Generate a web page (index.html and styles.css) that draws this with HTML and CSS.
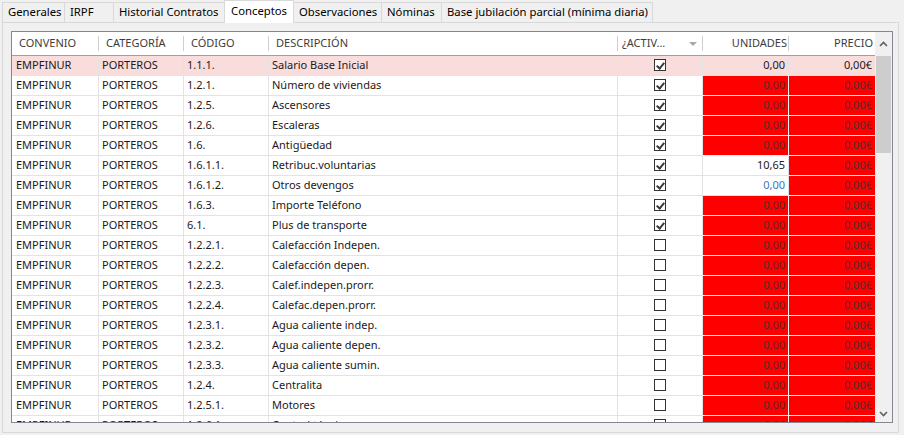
FILE: index.html
```html
<!DOCTYPE html>
<html lang="es">
<head>
<meta charset="utf-8">
<title>Conceptos</title>
<link rel="stylesheet" href="styles.css">
</head>
<body>
<div class="tabs">
  <div class="tab t-gen">Generales</div>
  <div class="tab t-irpf">IRPF</div>
  <div class="tab t-hist">Historial Contratos</div>
  <div class="tab t-conc active">Conceptos</div>
  <div class="tab t-obs">Observaciones</div>
  <div class="tab t-nom">Nóminas</div>
  <div class="tab t-base">Base jubilación parcial (mínima diaria)</div>
</div>
<div class="panel">
  <div class="grid">
    <div class="table">
      <div class="head">
        <div class="h">CONVENIO</div>
        <div class="h">CATEGORÍA</div>
        <div class="h">CÓDIGO</div>
        <div class="h">DESCRIPCIÓN</div>
        <div class="h h-act">¿ACTIV...<span class="drop"></span></div>
        <div class="h num">UNIDADES</div>
        <div class="h num last">PRECIO</div>
      </div>
      <div class="row sel"><div class="c first">EMPFINUR</div><div class="c">PORTEROS</div><div class="c">1.1.1.</div><div class="c">Salario Base Inicial</div><div class="c chk"><span class="box on"></span></div><div class="c num">0,00</div><div class="c num">0,00€</div></div>
      <div class="row"><div class="c first">EMPFINUR</div><div class="c">PORTEROS</div><div class="c">1.2.1.</div><div class="c">Número de viviendas</div><div class="c chk"><span class="box on"></span></div><div class="c num red">0,00</div><div class="c num red">0,00€</div></div>
      <div class="row"><div class="c first">EMPFINUR</div><div class="c">PORTEROS</div><div class="c">1.2.5.</div><div class="c">Ascensores</div><div class="c chk"><span class="box on"></span></div><div class="c num red">0,00</div><div class="c num red">0,00€</div></div>
      <div class="row"><div class="c first">EMPFINUR</div><div class="c">PORTEROS</div><div class="c">1.2.6.</div><div class="c">Escaleras</div><div class="c chk"><span class="box on"></span></div><div class="c num red">0,00</div><div class="c num red">0,00€</div></div>
      <div class="row"><div class="c first">EMPFINUR</div><div class="c">PORTEROS</div><div class="c">1.6.</div><div class="c">Antigüedad</div><div class="c chk"><span class="box on"></span></div><div class="c num red">0,00</div><div class="c num red">0,00€</div></div>
      <div class="row"><div class="c first">EMPFINUR</div><div class="c">PORTEROS</div><div class="c">1.6.1.1.</div><div class="c">Retribuc.voluntarias</div><div class="c chk"><span class="box on"></span></div><div class="c num">10,65</div><div class="c num red">0,00€</div></div>
      <div class="row"><div class="c first">EMPFINUR</div><div class="c">PORTEROS</div><div class="c">1.6.1.2.</div><div class="c">Otros devengos</div><div class="c chk"><span class="box on"></span></div><div class="c num blue">0,00</div><div class="c num red">0,00€</div></div>
      <div class="row"><div class="c first">EMPFINUR</div><div class="c">PORTEROS</div><div class="c">1.6.3.</div><div class="c">Importe Teléfono</div><div class="c chk"><span class="box on"></span></div><div class="c num red">0,00</div><div class="c num red">0,00€</div></div>
      <div class="row"><div class="c first">EMPFINUR</div><div class="c">PORTEROS</div><div class="c">6.1.</div><div class="c">Plus de transporte</div><div class="c chk"><span class="box on"></span></div><div class="c num red">0,00</div><div class="c num red">0,00€</div></div>
      <div class="row"><div class="c first">EMPFINUR</div><div class="c">PORTEROS</div><div class="c">1.2.2.1.</div><div class="c">Calefacción Indepen.</div><div class="c chk"><span class="box"></span></div><div class="c num red">0,00</div><div class="c num red">0,00€</div></div>
      <div class="row"><div class="c first">EMPFINUR</div><div class="c">PORTEROS</div><div class="c">1.2.2.2.</div><div class="c">Calefacción depen.</div><div class="c chk"><span class="box"></span></div><div class="c num red">0,00</div><div class="c num red">0,00€</div></div>
      <div class="row"><div class="c first">EMPFINUR</div><div class="c">PORTEROS</div><div class="c">1.2.2.3.</div><div class="c">Calef.indepen.prorr.</div><div class="c chk"><span class="box"></span></div><div class="c num red">0,00</div><div class="c num red">0,00€</div></div>
      <div class="row"><div class="c first">EMPFINUR</div><div class="c">PORTEROS</div><div class="c">1.2.2.4.</div><div class="c">Calefac.depen.prorr.</div><div class="c chk"><span class="box"></span></div><div class="c num red">0,00</div><div class="c num red">0,00€</div></div>
      <div class="row"><div class="c first">EMPFINUR</div><div class="c">PORTEROS</div><div class="c">1.2.3.1.</div><div class="c">Agua caliente indep.</div><div class="c chk"><span class="box"></span></div><div class="c num red">0,00</div><div class="c num red">0,00€</div></div>
      <div class="row"><div class="c first">EMPFINUR</div><div class="c">PORTEROS</div><div class="c">1.2.3.2.</div><div class="c">Agua caliente depen.</div><div class="c chk"><span class="box"></span></div><div class="c num red">0,00</div><div class="c num red">0,00€</div></div>
      <div class="row"><div class="c first">EMPFINUR</div><div class="c">PORTEROS</div><div class="c">1.2.3.3.</div><div class="c">Agua caliente sumin.</div><div class="c chk"><span class="box"></span></div><div class="c num red">0,00</div><div class="c num red">0,00€</div></div>
      <div class="row"><div class="c first">EMPFINUR</div><div class="c">PORTEROS</div><div class="c">1.2.4.</div><div class="c">Centralita</div><div class="c chk"><span class="box"></span></div><div class="c num red">0,00</div><div class="c num red">0,00€</div></div>
      <div class="row"><div class="c first">EMPFINUR</div><div class="c">PORTEROS</div><div class="c">1.2.5.1.</div><div class="c">Motores</div><div class="c chk"><span class="box"></span></div><div class="c num red">0,00</div><div class="c num red">0,00€</div></div>
      <div class="row"><div class="c first">EMPFINUR</div><div class="c">PORTEROS</div><div class="c">1.2.6.1.</div><div class="c">Control técnico</div><div class="c chk"><span class="box"></span></div><div class="c num red">0,00</div><div class="c num red">0,00€</div></div>
    </div>
    <div class="vscroll">
      <div class="arrow">
        <svg width="9" height="6" viewBox="0 0 9 6"><polyline points="1,5 4.5,1.5 8,5" fill="none" stroke="#606060" stroke-width="1.6"/></svg>
      </div>
      <div class="track"><div class="thumb"></div></div>
      <div class="arrow">
        <svg width="9" height="6" viewBox="0 0 9 6"><polyline points="1,1 4.5,4.5 8,1" fill="none" stroke="#606060" stroke-width="1.6"/></svg>
      </div>
    </div>
  </div>
</div>
</body>
</html>
```

FILE: styles.css
```css
* { box-sizing: border-box; }

html, body {
  margin: 0;
  padding: 0;
}

body {
  width: 904px;
  height: 435px;
  overflow: hidden;
  background: #f0f0f0;
  font-family: "Noto Sans", "Open Sans", sans-serif;
  font-size: 11px;
  color: #1a1a1a;
}

/* ---------- tabs ---------- */
.tabs {
  display: flex;
  align-items: flex-start;
  height: 22px;
  padding-left: 2px;
  font-size: 11.3px;
}

.tab {
  height: 20px;
  margin-top: 2px;
  padding-left: 5px;
  line-height: 18px;
  white-space: nowrap;
  background: #f0f0f0;
  border-top: 1px solid #d9d9d9;
  border-left: 1px solid #d9d9d9;
  color: #000;
}

.t-gen  { width: 62px; }
.t-irpf { width: 49px; }
.t-hist { width: 111px; }
.t-conc { width: 70px; }
.t-obs  { width: 87px; border-left: none; }
.t-nom  { width: 60px; }
.t-base { width: 212px; border-right: 1px solid #d9d9d9; }

.tab.active {
  position: relative;
  z-index: 1;
  height: 23px;
  margin-top: 0;
  background: #ffffff;
  border-right: 1px solid #d9d9d9;
  line-height: 19px;
  padding-left: 6px;
}

/* ---------- panel ---------- */
.panel {
  margin-left: 2px;
  width: 897px;
  height: 411px;
  border: 1px solid #d9d9d9;
  background: #f0f0f0;
  padding: 8px 0 0 8px;
}

.grid {
  display: flex;
  width: 882px;
  height: 392px;
  border: 1px solid #828790;
  background: #ffffff;
}

.table {
  width: 863px;
  height: 390px;
  overflow: hidden;
}

.head,
.row {
  display: grid;
  grid-template-columns: 87px 85px 85px 349px 85px 86px 86px;
}

.head {
  height: 24px;
  border-bottom: 1px solid #a0a0a0;
  color: #3c3c3c;
}

.h {
  position: relative;
  padding-left: 7px;
  line-height: 22px;
  white-space: nowrap;
  overflow: hidden;
}

.h::after {
  content: "";
  position: absolute;
  right: 0;
  top: 4px;
  bottom: 4px;
  width: 1px;
  background: #cfcfcf;
}

.h.last::after { display: none; }

.h.num {
  text-align: right;
  padding-left: 0;
  padding-right: 2px;
}

.h.last { padding-right: 2px; }

.h-act { padding-left: 4px; }

.drop {
  position: absolute;
  left: 71px;
  top: 10px;
  width: 0;
  height: 0;
  border-left: 4px solid transparent;
  border-right: 4px solid transparent;
  border-top: 4px solid #a8a8a8;
}

.row {
  height: 20px;
}

.c {
  height: 20px;
  line-height: 17px;
  padding-left: 3px;
  border-right: 1px solid #e3e3e3;
  border-bottom: 1px solid #e3e3e3;
  white-space: nowrap;
  overflow: hidden;
}

.c.first { padding-left: 4px; }

.row .c:last-child { border-right: none; }

.row.sel .c { background: #f9dcdc; }

.c.num {
  text-align: right;
  padding-left: 0;
  padding-right: 3px;
}

.c.red {
  background: #ff0000;
  color: #5c2a2a;
  border-color: #f2f2f2;
}

.c.blue { color: #3a78b8; }

.c.chk {
  display: flex;
  align-items: center;
  justify-content: center;
  padding-left: 0;
  padding-bottom: 1px;
}

.box {
  position: relative;
  width: 12px;
  height: 12px;
  border: 1px solid #333333;
  background: #ffffff;
}

.box.on::after {
  content: "";
  position: absolute;
  left: 3px;
  top: 0.5px;
  width: 3px;
  height: 6px;
  border-right: 2px solid #3a3a3a;
  border-bottom: 2px solid #3a3a3a;
  transform: rotate(40deg);
}

/* ---------- scrollbar ---------- */
.vscroll {
  width: 17px;
  height: 390px;
  display: flex;
  flex-direction: column;
  background: #f0f0f0;
}

.arrow {
  height: 17px;
  display: flex;
  align-items: center;
  justify-content: center;
}

.vscroll .arrow:first-child {
  height: 24px;
}

.track {
  flex: 1;
  padding: 0 1px;
}

.thumb {
  height: 97px;
  background: #cdcdcd;
}
```
